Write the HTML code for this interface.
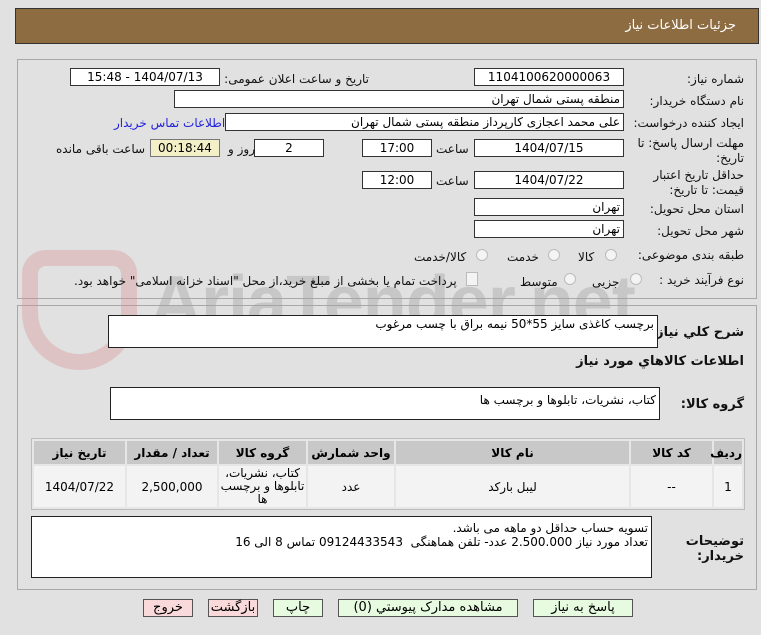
<!DOCTYPE html><html><head><meta charset="utf-8"><style>
body{margin:0;width:761px;height:635px;background:#e1e1e1;font-family:Tahoma,"DejaVu Sans",sans-serif;font-size:12px;position:relative;overflow:hidden;direction:rtl}
.a{position:absolute}
.hd{left:15px;top:8px;width:744px;height:36px;background:#8d6c41;border:1px solid #333;box-sizing:border-box}
.p{border:1px solid #a8a8a8;box-sizing:border-box}
.i{position:absolute;background:#fff;border:1px solid #333;box-sizing:border-box;height:18px;line-height:16px;text-align:center;font-size:12px}
.l{position:absolute;white-space:nowrap;font-size:12px;color:#111;line-height:14px}
.ta{position:absolute;background:#fff;border:1px solid #222;box-sizing:border-box;padding:1px 3px;font-size:12px;text-align:right;line-height:14px}
table{border-collapse:separate;border-spacing:2px;position:absolute;left:31px;top:438px;width:714px;height:72px;background:#e6e6e6;border:1px solid #bbb;table-layout:fixed}
th{background:#c8c8c8;font-size:12px;font-weight:bold;height:23px;padding:0}
td{background:#f3f3f3;text-align:center;font-size:12px;padding:0}
.b{position:absolute;top:599px;height:18px;border:1px solid #555;box-sizing:border-box;text-align:center;line-height:16px;font-size:13px}
.r{position:absolute;width:10px;height:10px;border:1px solid #bbb;border-radius:50%;background:#f4f4f4}
</style></head><body>
<div class="a hd"><span class="a" style="right:22px;top:9px;color:#fff;font-size:13px">جزئیات اطلاعات نیاز</span></div>
<div class="a p" style="left:17px;top:59px;width:740px;height:240px"></div>
<div class="a p" style="left:17px;top:305px;width:740px;height:285px"></div>
<div class="a" style="left:150px;top:262px;font-size:72px;line-height:80px;font-weight:bold;color:rgba(160,160,160,.4);font-family:'Liberation Sans',sans-serif;direction:ltr;letter-spacing:-1px">AriaTender.net</div>
<div class="a" style="left:22px;top:250px;width:115px;height:120px;border:16px solid rgba(215,140,140,.35);border-radius:25px 25px 60px 60px;box-sizing:border-box"></div>

<span class="l" style="right:17px;top:72px">شماره نیاز:</span>
<div class="i" style="left:474px;top:68px;width:150px">1104100620000063</div>
<span class="l" style="left:222px;top:72px;width:147px;text-align:right">تاریخ و ساعت اعلان عمومی:</span>
<div class="i" style="left:70px;top:68px;width:150px">1404/07/13 - 15:48</div>

<span class="l" style="right:17px;top:94px">نام دستگاه خریدار:</span>
<div class="i" style="left:174px;top:90px;width:450px;text-align:right;padding-right:3px">منطقه پستی شمال تهران</div>

<span class="l" style="right:17px;top:116px">ایجاد کننده درخواست:</span>
<div class="i" style="left:225px;top:113px;width:399px;text-align:right;padding-right:3px">علی محمد اعجازی کارپرداز منطقه پستی شمال تهران</div>
<span class="l" style="left:114px;top:116px;color:#2222dd">اطلاعات تماس خریدار</span>

<span class="l" style="right:17px;top:136px;line-height:15px">مهلت ارسال پاسخ: تا<br>تاریخ:</span>
<div class="i" style="left:474px;top:139px;width:150px">1404/07/15</div>
<span class="l" style="left:436px;top:142px">ساعت</span>
<div class="i" style="left:362px;top:139px;width:70px">17:00</div>
<div class="i" style="left:254px;top:139px;width:70px">2</div>
<span class="l" style="left:228px;top:142px">روز و</span>
<div class="i" style="left:150px;top:139px;width:70px;background:#f3f0c8;border-color:#777">00:18:44</div>
<span class="l" style="left:56px;top:142px">ساعت باقی مانده</span>

<span class="l" style="right:17px;top:168px;line-height:15px">حداقل تاریخ اعتبار<br>قیمت: تا تاریخ:</span>
<div class="i" style="left:474px;top:171px;width:150px">1404/07/22</div>
<span class="l" style="left:436px;top:174px">ساعت</span>
<div class="i" style="left:362px;top:171px;width:70px">12:00</div>

<span class="l" style="right:17px;top:202px">استان محل تحویل:</span>
<div class="i" style="left:474px;top:198px;width:150px;text-align:right;padding-right:3px">تهران</div>
<span class="l" style="right:17px;top:224px">شهر محل تحویل:</span>
<div class="i" style="left:474px;top:220px;width:150px;text-align:right;padding-right:3px">تهران</div>

<span class="l" style="right:17px;top:248px">طبقه بندی موضوعی:</span>
<div class="r" style="left:605px;top:249px"></div><span class="l" style="left:578px;top:250px">کالا</span>
<div class="r" style="left:548px;top:249px"></div><span class="l" style="left:507px;top:250px">خدمت</span>
<div class="r" style="left:476px;top:249px"></div><span class="l" style="left:414px;top:250px">کالا/خدمت</span>

<span class="l" style="right:17px;top:273px">نوع فرآیند خرید :</span>
<div class="r" style="left:630px;top:273px"></div><span class="l" style="left:592px;top:275px">جزیی</span>
<div class="r" style="left:564px;top:273px"></div><span class="l" style="left:520px;top:275px">متوسط</span>
<div class="a" style="left:466px;top:272px;width:10px;height:12px;border:1px solid #bbb;background:#f4f4f4"></div>
<span class="l" style="left:74px;top:274px">پرداخت تمام یا بخشی از مبلغ خرید،از محل "اسناد خزانه اسلامی" خواهد بود.</span>

<span class="l" style="right:17px;top:326px;font-weight:bold;font-size:13px">شرح کلي نياز:</span>
<div class="ta" style="left:108px;top:315px;width:550px;height:33px">برچسب کاغذی سایز 55*50 نیمه براق با چسب مرغوب</div>
<span class="l" style="right:17px;top:355px;font-weight:bold;font-size:13px">اطلاعات کالاهاي مورد نياز</span>
<span class="l" style="right:17px;top:398px;font-weight:bold;font-size:13px">گروه کالا:</span>
<div class="ta" style="left:110px;top:387px;width:550px;height:33px;padding-top:5px">کتاب، نشریات، تابلوها و برچسب ها</div>

<table><tr><th style="width:28px">ردیف</th><th style="width:81px">کد کالا</th><th style="width:233px">نام کالا</th><th style="width:86px">واحد شمارش</th><th style="width:87px">گروه کالا</th><th style="width:90px">تعداد / مقدار</th><th>تاریخ نیاز</th></tr>
<tr><td>1</td><td>--</td><td>لیبل بارکد</td><td>عدد</td><td style="line-height:13px">کتاب، نشریات،<br>تابلوها و برچسب<br>ها</td><td>2,500,000</td><td>1404/07/22</td></tr></table>

<span class="l" style="right:17px;top:534px;font-weight:bold;font-size:13px;line-height:15px">توضیحات<br>خریدار:</span>
<div class="ta" style="left:31px;top:516px;width:621px;height:62px;padding-top:4px">تسویه حساب حداقل دو ماهه می باشد.<br>تعداد مورد نیاز 2.500.000 عدد- تلفن هماهنگی &nbsp;09124433543 تماس 8 الی 16</div>

<div class="b" style="left:533px;width:100px;background:#e6fbe0">پاسخ به نیاز</div>
<div class="b" style="left:338px;width:180px;background:#e6fbe0">مشاهده مدارک پیوستي (0)</div>
<div class="b" style="left:273px;width:50px;background:#e6fbe0">چاپ</div>
<div class="b" style="left:208px;width:50px;background:#f9d9d9">بازگشت</div>
<div class="b" style="left:143px;width:50px;background:#f9d9d9">خروج</div>
</body></html>
